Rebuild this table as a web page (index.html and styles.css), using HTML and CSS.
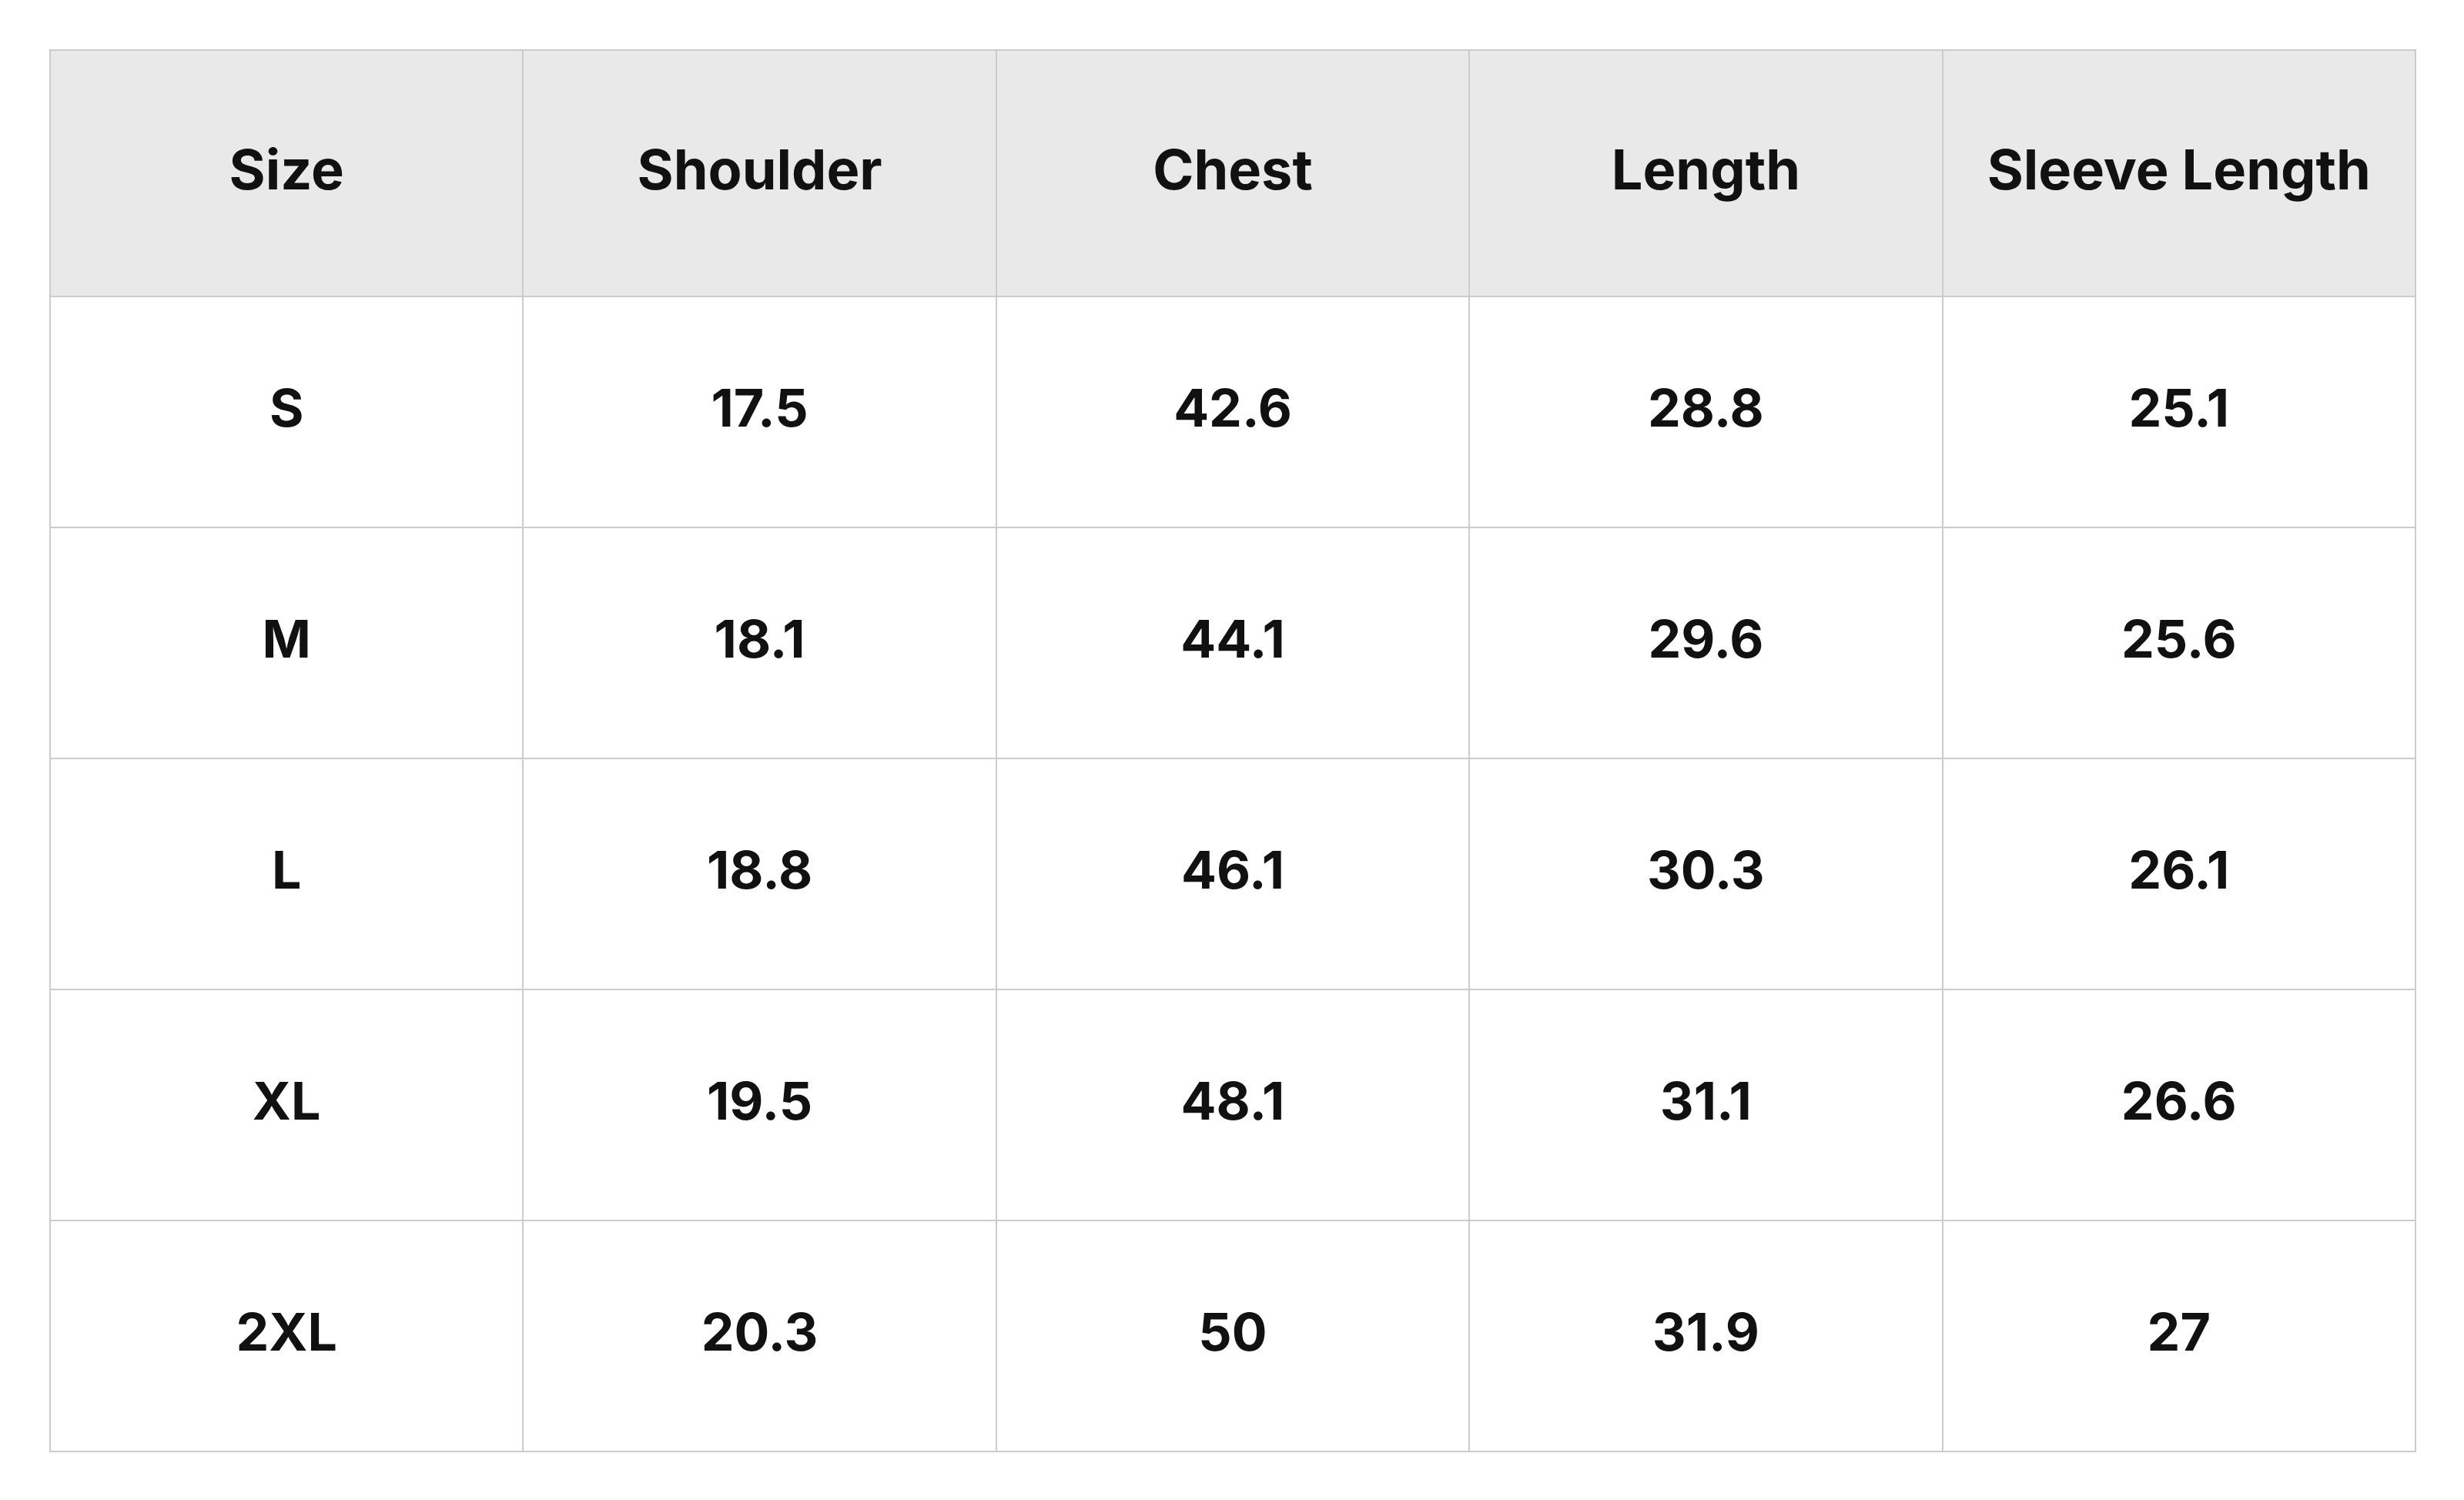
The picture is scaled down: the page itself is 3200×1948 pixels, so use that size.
FILE: index.html
```html
<!DOCTYPE html>
<html>
<head>
<meta charset="utf-8">
<link rel="stylesheet" href="styles.css">
</head>
<body>
<div class="wrap">
<table class="size-table">
  <thead>
    <tr><th>Size</th><th>Shoulder</th><th>Chest</th><th>Length</th><th>Sleeve Length</th></tr>
  </thead>
  <tbody>
    <tr><td>S</td><td>17.5</td><td>42.6</td><td>28.8</td><td>25.1</td></tr>
    <tr><td>M</td><td>18.1</td><td>44.1</td><td>29.6</td><td>25.6</td></tr>
    <tr><td>L</td><td>18.8</td><td>46.1</td><td>30.3</td><td>26.1</td></tr>
    <tr><td>XL</td><td>19.5</td><td>48.1</td><td>31.1</td><td>26.6</td></tr>
    <tr><td>2XL</td><td>20.3</td><td>50</td><td>31.9</td><td>27</td></tr>
  </tbody>
</table>
</div>
</body>
</html>
```
FILE: styles.css
```css
html, body {
  margin: 0;
  padding: 0;
  background: #ffffff;
}
.wrap {
  padding: 64px 0 0 64px;
}
.size-table {
  border-collapse: collapse;
  table-layout: fixed;
  width: 3074px;
  font-family: Inter, "Liberation Sans", sans-serif;
  color: #111111;
}
.size-table th,
.size-table td {
  border: 2px solid #cccccc;
  text-align: center;
  vertical-align: middle;
  padding: 0 0 12px 0;
}
.size-table th {
  background: #e9e9e9;
  height: 306px;
  font-size: 72px;
  font-weight: 700;
}
.size-table td {
  height: 286px;
  font-size: 68px;
  font-weight: 700;
}
```
